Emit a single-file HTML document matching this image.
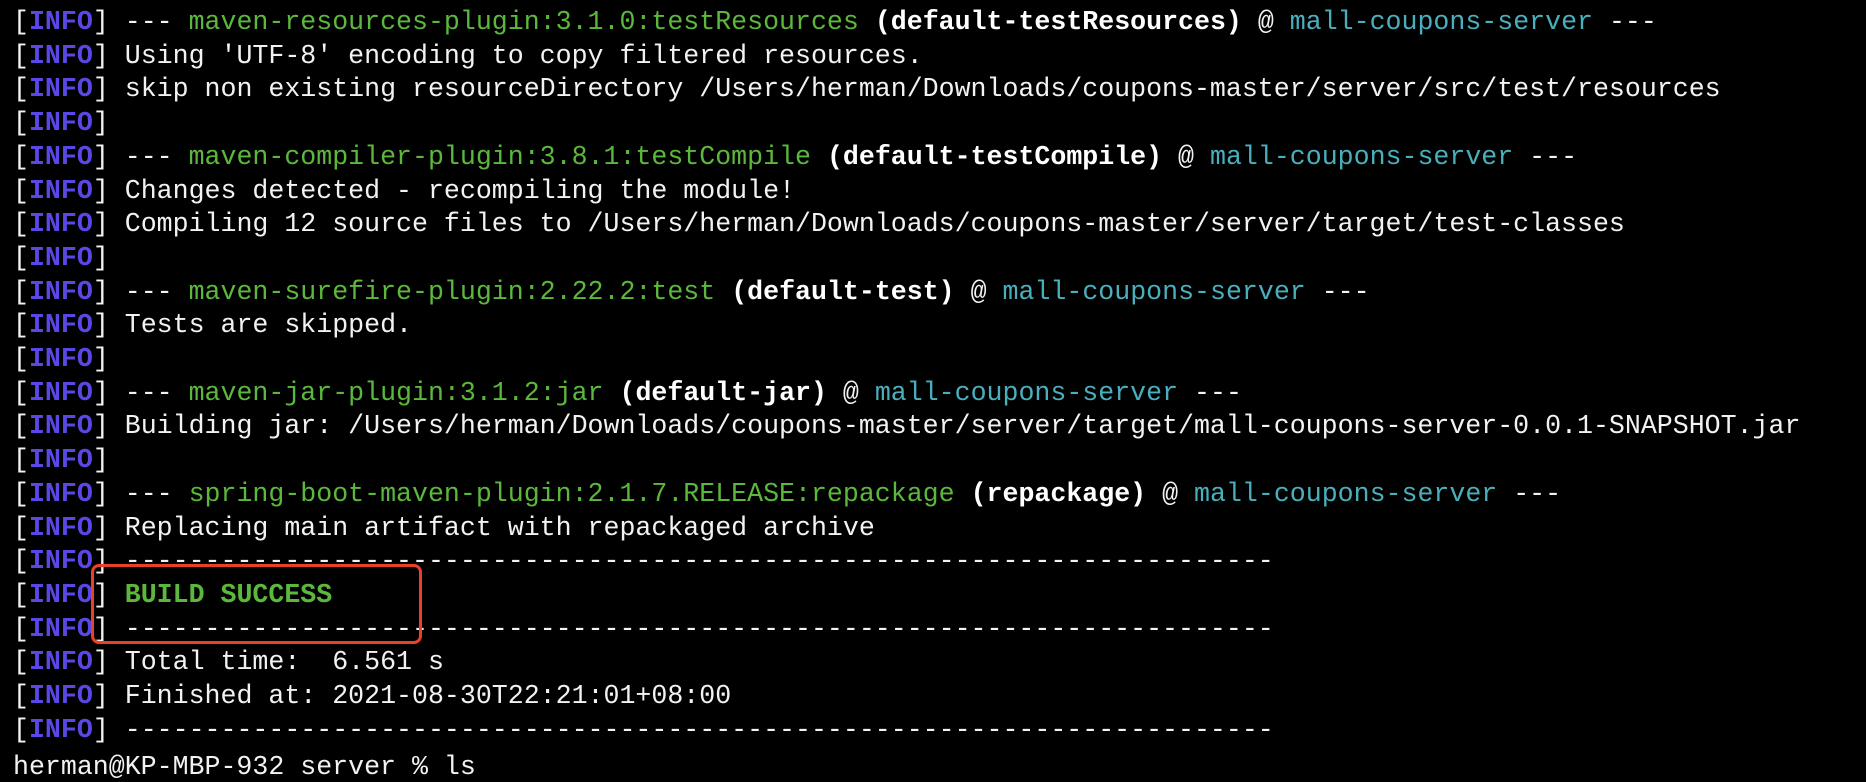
<!DOCTYPE html>
<html><head><meta charset="utf-8"><style>
html,body{margin:0;padding:0;background:#000;width:1866px;height:766px;overflow:hidden}
pre{margin:0;position:absolute;left:13px;top:6px;font-family:"Liberation Mono","DejaVu Sans Mono",monospace;font-size:26.6px;line-height:33.7px;color:#f2f2f2;white-space:pre}
.i{color:#5a48e6;font-weight:bold}
.g{color:#5cb83c}
.c{color:#4aafbd}
.b{font-weight:bold;color:#fff}
.p{position:relative;top:4px}
.box{position:absolute;left:91px;top:564px;width:325px;height:74px;border:3px solid #e8402a;border-radius:8px}
</style></head><body>
<pre>[<span class="i">INFO</span>] --- <span class="g">maven-resources-plugin:3.1.0:testResources</span> <span class="b">(default-testResources)</span> @ <span class="c">mall-coupons-server</span> ---
[<span class="i">INFO</span>] Using 'UTF-8' encoding to copy filtered resources.
[<span class="i">INFO</span>] skip non existing resourceDirectory /Users/herman/Downloads/coupons-master/server/src/test/resources
[<span class="i">INFO</span>]
[<span class="i">INFO</span>] --- <span class="g">maven-compiler-plugin:3.8.1:testCompile</span> <span class="b">(default-testCompile)</span> @ <span class="c">mall-coupons-server</span> ---
[<span class="i">INFO</span>] Changes detected - recompiling the module!
[<span class="i">INFO</span>] Compiling 12 source files to /Users/herman/Downloads/coupons-master/server/target/test-classes
[<span class="i">INFO</span>]
[<span class="i">INFO</span>] --- <span class="g">maven-surefire-plugin:2.22.2:test</span> <span class="b">(default-test)</span> @ <span class="c">mall-coupons-server</span> ---
[<span class="i">INFO</span>] Tests are skipped.
[<span class="i">INFO</span>]
[<span class="i">INFO</span>] --- <span class="g">maven-jar-plugin:3.1.2:jar</span> <span class="b">(default-jar)</span> @ <span class="c">mall-coupons-server</span> ---
[<span class="i">INFO</span>] Building jar: /Users/herman/Downloads/coupons-master/server/target/mall-coupons-server-0.0.1-SNAPSHOT.jar
[<span class="i">INFO</span>]
[<span class="i">INFO</span>] --- <span class="g">spring-boot-maven-plugin:2.1.7.RELEASE:repackage</span> <span class="b">(repackage)</span> @ <span class="c">mall-coupons-server</span> ---
[<span class="i">INFO</span>] Replacing main artifact with repackaged archive
[<span class="i">INFO</span>] ------------------------------------------------------------------------
[<span class="i">INFO</span>] <span class="g" style="font-weight:bold">BUILD SUCCESS</span>
[<span class="i">INFO</span>] ------------------------------------------------------------------------
[<span class="i">INFO</span>] Total time:  6.561 s
[<span class="i">INFO</span>] Finished at: 2021-08-30T22:21:01+08:00
[<span class="i">INFO</span>] ------------------------------------------------------------------------
<span class="p">herman@KP-MBP-932 server % ls</span></pre>
<div class="box"></div>
</body></html>
